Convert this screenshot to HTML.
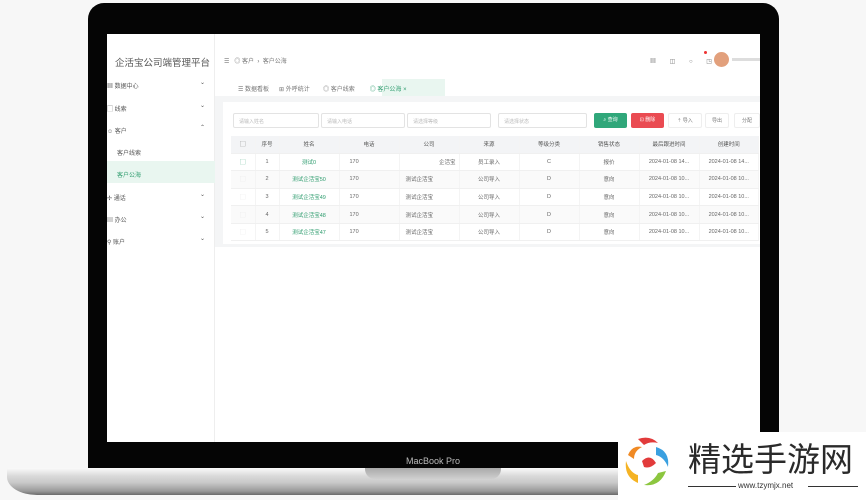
<!DOCTYPE html>
<html><head><meta charset="utf-8"><style>
*{margin:0;padding:0;box-sizing:border-box}
body{width:866px;height:500px;background:#f7f7f7;position:relative;overflow:hidden;font-family:"Liberation Sans","Noto Sans CJK SC",sans-serif;color:#666}
.abs{position:absolute}
.bezel{left:88px;top:3px;width:691px;height:468px;background:#050505;border-radius:16px 16px 0 0}
.screen{left:107px;top:34px;width:653px;height:408px;background:#fff;overflow:hidden}
.base{left:7px;top:468px;width:853px;height:27px;border-radius:2px 2px 30px 30px/2px 2px 18px 18px;background:linear-gradient(#fafafa 0,#d9d9d9 30%,#c8c8c8 55%,#9a9a9a 85%,#6a6a6a 100%)}
.notch{left:365px;top:468px;width:136px;height:11px;background:linear-gradient(#a9a9a9,#cfcfcf);border-radius:0 0 10px 10px}
.mbp{left:365px;top:456px;width:136px;text-align:center;font-size:9px;color:#bbb}
.s{font-size:6px;color:#777;white-space:nowrap}
.side{left:0;top:0;width:108px;height:408px;background:#fff;border-right:1px solid #eee}
.side div{position:absolute;font-size:6px;color:#555;white-space:nowrap}
table{border-collapse:collapse;position:absolute;left:124px;top:102px;width:528px;font-size:5.5px;color:#666}
td{height:17.6px;text-align:center;border-bottom:1px solid #f0f0f0;border-right:1px solid #f4f4f4;white-space:nowrap}
tr.h td{background:#f3f4f6;height:17px;color:#555}
tr:nth-child(odd):not(.h) td{background:#fafafa}
.g{color:#2e9c6e}
.inp{position:absolute;top:79px;height:15px;border:1px solid #e3e3e3;font-size:5px;color:#bbb;padding:4px 5px;border-radius:2px;white-space:nowrap}
.btn{position:absolute;top:79px;height:15px;font-size:5px;color:#fff;text-align:center;line-height:15px;border-radius:2px}
</style></head><body>
<div class="abs bezel"></div>
<div class="abs screen">
 <div class="abs side">
  <div style="left:8px;top:21px;font-size:9.5px;color:#555">企活宝公司端管理平台</div>
  <div style="left:0;top:47px">▦ 数据中心</div><div style="left:93px;top:45px">⌄</div>
  <div style="left:0;top:70px">▢ 线索</div><div style="left:93px;top:68px">⌄</div>
  <div style="left:0;top:92px">☺ 客户</div><div style="left:93px;top:90px">⌃</div>
  <div style="left:10px;top:114px">客户线索</div>
  <div style="left:0;top:127px;width:108px;height:22px;background:#e9f6f0"></div>
  <div style="left:10px;top:136px;color:#2e9c6e">客户公海</div>
  <div style="left:0;top:159px">✢ 通话</div><div style="left:93px;top:157px">⌄</div>
  <div style="left:0;top:181px">▤ 办公</div><div style="left:93px;top:179px">⌄</div>
  <div style="left:0;top:203px">⚲ 账户</div><div style="left:93px;top:201px">⌄</div>
 </div>
 <div class="abs s" style="left:117px;top:22px">☰ &nbsp;&nbsp;◎ 客户 &nbsp;›&nbsp; 客户公海</div>
 <div class="abs s" style="left:543px;top:22px;letter-spacing:6px">▦ ◫ ○ ◳</div>
 <div class="abs" style="left:607px;top:18px;width:15px;height:15px;border-radius:50%;background:#e2a07c"></div>
 <div class="abs" style="left:597px;top:17px;width:3px;height:3px;border-radius:50%;background:#e33"></div>
 <div class="abs" style="left:625px;top:24px;width:28px;height:3px;background:#ddd"></div>
 <div class="abs" style="left:275px;top:45px;width:63px;height:17px;background:#e9f6f0"></div>
 <div class="abs s" style="left:131px;top:50px">☰ 数据看板 &nbsp;&nbsp;&nbsp;&nbsp;&nbsp;⊞ 外呼统计 &nbsp;&nbsp;&nbsp;&nbsp;&nbsp;&nbsp;&nbsp;◎ 客户线索 &nbsp;&nbsp;&nbsp;&nbsp;&nbsp;&nbsp;&nbsp;&nbsp;<span class="g">◎ 客户公海 ×</span></div>
 <div class="abs" style="left:108px;top:62px;width:545px;height:6px;background:#f4f5f6"></div>
 <div class="abs" style="left:108px;top:62px;width:8px;height:150px;background:#f4f5f6"></div>
 <div class="abs" style="left:108px;top:210px;width:545px;height:3px;background:#f4f5f6"></div>
 <div class="inp" style="left:126px;width:86px">请输入姓名</div>
 <div class="inp" style="left:214px;width:84px">请输入电话</div>
 <div class="inp" style="left:300px;width:84px">请选择等级</div>
 <div class="inp" style="left:391px;width:89px">请选择状态</div>
 <div class="btn" style="left:487px;width:33px;background:#30a77a">⌕ 查询</div>
 <div class="btn" style="left:524px;width:33px;background:#ea4b52">⊡ 删除</div>
 <div class="btn" style="left:561px;width:34px;color:#777;border:1px solid #eee">⇡ 导入</div>
 <div class="btn" style="left:598px;width:24px;color:#777;border:1px solid #eee">导出</div>
 <div class="btn" style="left:627px;width:26px;color:#777;border:1px solid #eee">分配</div>
 <table>
  <tr class="h"><td style="width:24px">▢</td><td style="width:24px">序号</td><td style="width:60px">姓名</td><td style="width:60px">电话</td><td style="width:60px">公司</td><td style="width:60px">来源</td><td style="width:60px">等级分类</td><td style="width:60px">销售状态</td><td style="width:60px">最后跟进时间</td><td>创建时间</td></tr>
  <tr><td class="g">▢</td><td>1</td><td class="g">测试0</td><td style="text-align:left;padding-left:10px">170</td><td style="text-align:right;padding-right:3px">企活宝</td><td>员工录入</td><td>C</td><td>报价</td><td>2024-01-08 14...</td><td>2024-01-08 14...</td></tr>
  <tr><td style="color:#ddd">▢</td><td>2</td><td class="g">测试企活宝50</td><td style="text-align:left;padding-left:10px">170</td><td style="text-align:left;padding-left:6px">测试企活宝</td><td>公司导入</td><td>D</td><td>意向</td><td>2024-01-08 10...</td><td>2024-01-08 10...</td></tr>
  <tr><td style="color:#ddd">▢</td><td>3</td><td class="g">测试企活宝49</td><td style="text-align:left;padding-left:10px">170</td><td style="text-align:left;padding-left:6px">测试企活宝</td><td>公司导入</td><td>D</td><td>意向</td><td>2024-01-08 10...</td><td>2024-01-08 10...</td></tr>
  <tr><td style="color:#ddd">▢</td><td>4</td><td class="g">测试企活宝48</td><td style="text-align:left;padding-left:10px">170</td><td style="text-align:left;padding-left:6px">测试企活宝</td><td>公司导入</td><td>D</td><td>意向</td><td>2024-01-08 10...</td><td>2024-01-08 10...</td></tr>
  <tr><td style="color:#ddd">▢</td><td>5</td><td class="g">测试企活宝47</td><td style="text-align:left;padding-left:10px">170</td><td style="text-align:left;padding-left:6px">测试企活宝</td><td>公司导入</td><td>D</td><td>意向</td><td>2024-01-08 10...</td><td>2024-01-08 10...</td></tr>
 </table>
</div>
<div class="abs base"></div>
<div class="abs notch"></div>
<div class="abs mbp">MacBook Pro</div>
<div class="abs" style="left:618px;top:432px;width:248px;height:68px;background:#fff"></div>
<svg class="abs" style="left:620px;top:433px" width="60" height="62" viewBox="0 0 60 62">
 <path d="M18 6 Q30 2 38 10 Q30 8 24 12Z" fill="#e23b3b"/>
 <path d="M36 14 Q50 18 48 34 Q44 24 36 22Z" fill="#3aa0e0"/>
 <path d="M46 38 Q40 54 24 52 Q34 48 38 40Z" fill="#8cc63f"/>
 <path d="M18 50 Q4 44 6 28 Q10 40 18 42Z" fill="#f5b324"/>
 <path d="M8 22 Q12 12 22 14 Q14 18 14 26Z" fill="#f08a24"/>
 <path d="M22 28 Q30 20 36 30 Q30 36 24 34Z" fill="#e23b3b"/>
</svg>
<div class="abs" style="left:688px;top:436px;font-size:33px;color:#2a2a2a;white-space:nowrap;font-family:'Noto Sans CJK SC',sans-serif;line-height:42px">精选手游网</div>
<div class="abs" style="left:688px;top:486px;width:48px;height:1px;background:#333"></div>
<div class="abs" style="left:808px;top:486px;width:50px;height:1px;background:#333"></div>
<div class="abs" style="left:738px;top:481px;font-size:8px;color:#333;white-space:nowrap">www.tzymjx.net</div>
</body></html>
